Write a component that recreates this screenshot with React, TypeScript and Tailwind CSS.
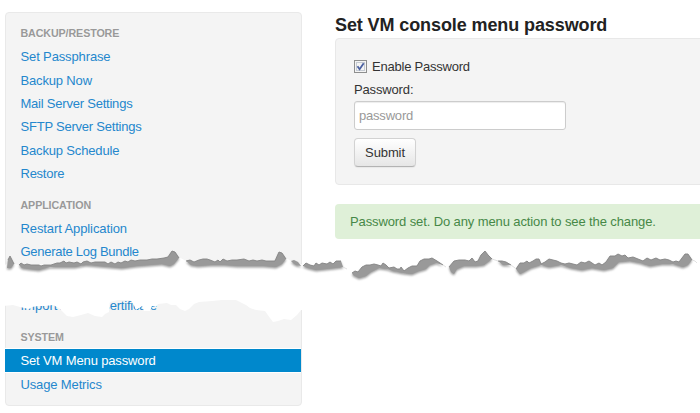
import React from "react";

interface NavItem {
  label: string;
  tracking: string;
}

const backupLinks: NavItem[] = [
  { label: "Set Passphrase", tracking: "tracking-[-0.13px]" },
  { label: "Backup Now", tracking: "tracking-[-0.16px]" },
  { label: "Mail Server Settings", tracking: "tracking-[-0.22px]" },
  { label: "SFTP Server Settings", tracking: "tracking-[-0.22px]" },
  { label: "Backup Schedule", tracking: "tracking-[-0.16px]" },
  { label: "Restore", tracking: "tracking-[-0.26px]" },
];
const applicationLinks: NavItem[] = [
  { label: "Restart Application", tracking: "tracking-[-0.1px]" },
  { label: "Generate Log Bundle", tracking: "tracking-[-0.28px]" },
];

function NavHeader({ children }: { children: React.ReactNode }) {
  return (
    <h3 className="flex h-[23.3px] items-center px-[15.5px] text-[10.7px] font-bold uppercase leading-none tracking-[-0.1px] text-[#999] [text-shadow:0_1px_0_rgba(255,255,255,0.5)]">
      {children}
    </h3>
  );
}

function NavLink({ label, tracking, active = false }: NavItem & { active?: boolean }) {
  return (
    <a
      href="#"
      className={`flex h-[23.3px] items-center px-[15.5px] ${tracking} ${
        active
          ? "bg-[#0088cc] text-white shadow-[0_-1px_0_#fff,0_1px_0_#fff]"
          : "text-[#2487cd]"
      }`}
    >
      {label}
    </a>
  );
}

// Ragged strips of the paper tear, left to right.
const strips = [
  "M7 268L8 260L10 256L14 264L11 268Z",
  "M19 265L21 263L24 265L27 264L31 265L35 265L39 265L41 266L44 265L47 265L51 265L54 264L57 263L60 263L64 261L66 263L69 262L74 263L77 262L81 264L83 262L87 261L91 263L95 262L101 262L105 262L108 264L111 262L115 264L118 262L121 263L125 261L128 262L131 260L135 261L140 260L147 260L152 259L157 259L164 258L168 257L172 251L175 252L179 258L174 264L170 266L162 264L150 265L137 266L122 268L110 267L98 266L86 265L75 267L63 267L50 267L39 270L29 269L22 268Z",
  "M186 261L190 260L194 262L199 260L203 259L207 259L210 260L215 262L218 260L220 262L223 259L227 261L232 260L237 260L244 259L249 261L253 260L257 261L262 260L266 261L271 261L275 261L279 252L282 253L286 259L282 264L276 267L264 266L251 266L237 266L225 265L211 265L198 266L191 265Z",
  "M291 261L294 260L298 262L301 266L296 265L293 263Z",
  "M303 266L306 263L308 264L310 265L314 266L316 263L319 265L322 263L327 264L330 262L333 264L336 261L341 261L343 267L335 268L326 269L316 270L308 268Z",
  "M352 273L355 271L358 272L362 267L366 265L370 265L374 264L378 265L381 266L383 263L386 265L389 268L394 267L397 269L400 269L401 267L404 271L408 268L412 266L417 266L420 261L424 259L429 259L432 258L437 261L443 265L436 263L430 265L426 269L419 271L412 274L403 273L393 271L387 269L379 268L371 272L366 276L359 278L353 275Z",
  "M449 267L454 261L459 260L465 260L469 261L472 258L475 262L478 261L481 255L485 251L488 255L492 259L488 262L484 265L476 266L464 266L457 269L454 274L451 272Z",
  "M498 261L502 261L506 262L511 265L503 265Z",
  "M516 269L520 263L524 263L527 261L529 263L533 261L536 259L539 259L541 264L545 262L549 259L553 260L557 261L561 263L565 264L569 263L573 264L577 265L581 262L585 263L589 261L592 263L595 265L599 263L602 265L606 262L610 256L615 256L618 254L622 256L625 255L628 258L633 257L638 259L643 261L647 258L651 260L656 258L660 260L665 259L669 260L673 262L676 261L679 262L682 258L685 254L688 254L692 260L688 265L683 267L673 264L662 264L650 266L640 263L630 261L619 262L613 268L604 270L592 268L582 270L571 268L561 265L549 267L541 265L531 268L524 272L520 274Z",
];

const edges = [
  "M8 260L10 256L14 264",
  "M19 265L21 263L24 265L27 264L31 265L35 265L39 265L41 266L44 265L47 265L51 265L54 264L57 263L60 263L64 261L66 263L69 262L74 263L77 262L81 264L83 262L87 261L91 263L95 262L101 262L105 262L108 264L111 262L115 264L118 262L121 263L125 261L128 262L131 260L135 261L140 260L147 260L152 259L157 259L164 258L168 257L172 251L175 252L179 258",
  "M186 261L190 260L194 262L199 260L203 259L207 259L210 260L215 262L218 260L220 262L223 259L227 261L232 260L237 260L244 259L249 261L253 260L257 261L262 260L266 261L271 261L275 261L279 252L282 253L286 259",
  "M303 266L306 263L308 264L310 265L314 266L316 263L319 265L322 263L327 264L330 262L333 264L336 261L341 261",
  "M352 273L355 271L358 272L362 267L366 265L370 265L374 264L378 265L381 266L383 263L386 265L389 268L394 267L397 269L400 269L401 267L404 271L408 268L412 266L417 266L420 261L424 259L429 259L432 258L437 261L443 265",
  "M449 267L454 261L459 260L465 260L469 261L472 258L475 262L478 261L481 255L485 251L488 255L492 259",
  "M498 261L502 261L506 262L511 265",
  "M516 269L520 263L524 263L527 261L529 263L533 261L536 259L539 259L541 264L545 262L549 259L553 260L557 261L561 263L565 264L569 263L573 264L577 265L581 262L585 263L589 261L592 263L595 265L599 263L602 265L606 262L610 256L615 256L618 254L622 256L625 255L628 258L633 257L638 259L643 261L647 258L651 260L656 258L660 260L665 259L669 260L673 262L676 261L679 262L682 258L685 254L688 254L692 260",
];

function PaperTear() {
  return (
    <svg
      className="pointer-events-none absolute left-0 top-0"
      width="700"
      height="413"
      viewBox="0 0 700 413"
      aria-hidden="true"
    >
      <defs>
        <filter id="soft" x="-5%" y="-50%" width="110%" height="200%">
          <feGaussianBlur stdDeviation="0.8" />
        </filter>
      </defs>
      <path
        fill="#fff"
        d="M3 266L10 262L14 264L19 265L60 264L100 264L130 263L165 261L179 257L186 261L230 262L275 263L286 258L291 261L304 265V310L301 310L297 315L291 320L284 319L278 321L273 322L270 318L265 311L256 310L250 308L246 305L240 302L236 300L222 300L212 301L199 302L194 304L189 309L185 311L180 309L176 305L171 305L167 303L158 304L156 307L152 306L150 311L144 311L142 306L139 308L136 310L133 303L130 300L118 300L110 302L109 312L105 314L102 317L95 316L88 313L81 315L73 317L67 316L63 312L59 308L53 305L45 306L38 306L32 307L29 309L20 307L13 305L3 306Z"
      />
      <g fill="#999" filter="url(#soft)">
        {strips.map((d) => (
          <path key={d} d={d} transform="translate(0 1.4)" />
        ))}
      </g>
      <g fill="#999">
        {strips.map((d) => (
          <path key={d} d={d} />
        ))}
      </g>
      <g fill="none" stroke="#858585" strokeWidth="0.9">
        {edges.map((d) => (
          <path key={d} d={d} />
        ))}
      </g>
      <path
        fill="none"
        stroke="#d4d4d4"
        strokeWidth="0.7"
        d="M343 267L347 269M443 265L446 267M492 259L498 261M511 265L515 268M692 260L695 261L697 263"
      />
    </svg>
  );
}

export default function App() {
  return (
    <div className="relative flex h-[413px] w-[700px] overflow-hidden bg-white font-['Liberation_Sans',Arial,sans-serif] text-[13px] leading-none text-[#333]">
      <nav className="ml-[5px] mt-3 flex h-[394px] w-[297px] shrink-0 flex-col rounded-[4px] border border-[#e9e9e9] bg-[#f4f4f4] pt-[9px]">
        <div className="-ml-px">
          <NavHeader>Backup/Restore</NavHeader>
          {backupLinks.map((item) => (
            <NavLink key={item.label} {...item} />
          ))}
          <div className="mt-[8.5px]">
            <NavHeader>Application</NavHeader>
            {applicationLinks.map((item) => (
              <NavLink key={item.label} {...item} />
            ))}
          </div>
          <a href="#" className="mt-[30px] flex h-[23.3px] items-center px-[15.5px] text-[#2487cd]">
            <span className="w-[39px]">Import</span>
            <span className="w-[41px]">Root</span>
            <span className="tracking-[-0.2px]">Certificate</span>
          </a>
          <div className="mt-[9px]">
            <NavHeader>System</NavHeader>
            <NavLink label="Set VM Menu password" tracking="tracking-[-0.14px]" active />
            <NavLink label="Usage Metrics" tracking="tracking-[-0.14px]" />
          </div>
        </div>
      </nav>

      <main className="ml-[33px] flex w-[400px] shrink-0 flex-col">
        <h1 className="mt-[15px] h-[23px] whitespace-nowrap text-[18px] font-bold leading-[20px] tracking-[-0.1px] text-[#222]">
          Set VM console menu password
        </h1>
        <form className="flex h-[147px] flex-col items-start rounded-[4px] border border-[#e8e8e8] bg-[#f4f4f4] pl-[18px] pt-[20px]">
          <label className="flex h-[15px] items-center tracking-[-0.22px]">
            <span className="mr-[5px] flex size-[13px] items-center justify-center border border-[#8e8f8f] bg-[#f4f4f4] shadow-[inset_0_0_0_1px_#f4f4f4,inset_0_0_0_2px_#c5cbd3]">
              <svg width="9" height="9" viewBox="0 0 9 9">
                <path d="M1.5 4.2L3.6 7.2L7.7 1.2" fill="none" stroke="#4b61a1" strokeWidth="1.8" />
              </svg>
            </span>
            Enable Password
          </label>
          <label className="mt-[8px] flex h-[15px] items-center tracking-[-0.15px]" htmlFor="password">
            Password:
          </label>
          <input
            id="password"
            type="text"
            placeholder="password"
            className="mt-[4px] h-[29px] w-[212px] rounded-[3px] border border-[#ccc] bg-white px-1 text-[13px] tracking-[-0.2px] shadow-[inset_0_1px_1px_rgba(0,0,0,0.075)] placeholder:text-[#999]"
          />
          <button
            type="button"
            className="mt-[8px] h-[29px] w-[62px] rounded-[4px] border border-[#d2d2d2] border-b-[#b3b3b3] bg-linear-to-b from-white to-[#e6e6e6] text-[13px] tracking-[-0.1px] shadow-[0_1px_1px_rgba(0,0,0,0.05)]"
          >
            Submit
          </button>
        </form>
        <div
          role="status"
          className="mt-[18.5px] flex h-[35.5px] items-center rounded-[4px] bg-[#dff0d8] pl-[15px] tracking-[-0.11px] text-[#468847]"
        >
          Password set. Do any menu action to see the change.
        </div>
      </main>

      <PaperTear />
    </div>
  );
}
